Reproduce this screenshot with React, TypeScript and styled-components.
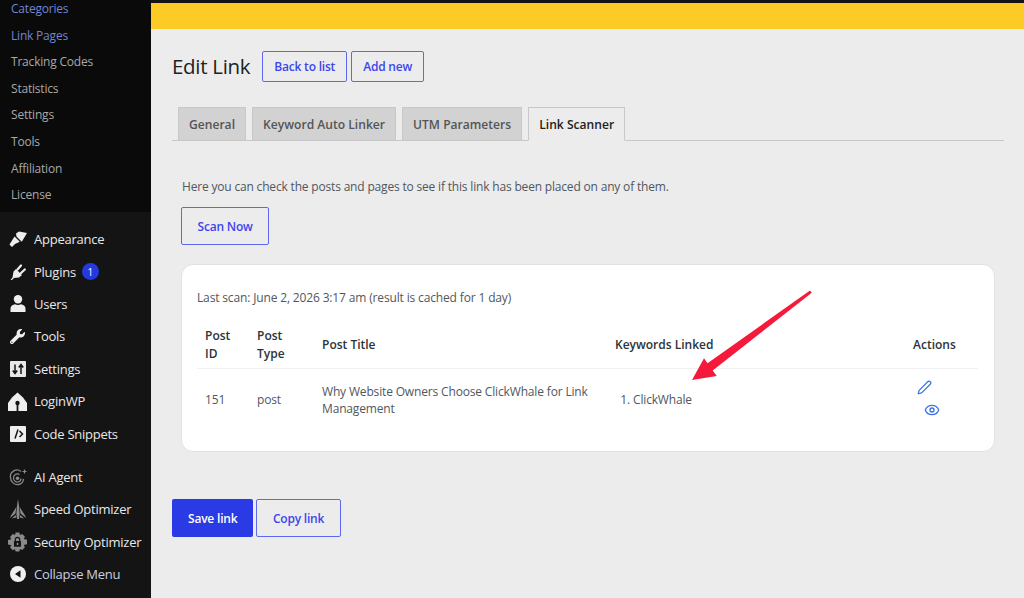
import styled, { createGlobalStyle } from "styled-components";
import { FaWrench } from "react-icons/fa";
import { Pen, Eye } from "lucide-react";

const GlobalStyle = createGlobalStyle`
  html, body {
    margin: 0;
    padding: 0;
    background: #ececec;
    overflow: hidden;
  }
  * {
    box-sizing: border-box;
  }
`;

const FONT = `"Open Sans", "Noto Sans", "Liberation Sans", sans-serif`;

const subItems = [
  { label: "Categories", active: true },
  { label: "Link Pages", active: true },
  { label: "Tracking Codes" },
  { label: "Statistics" },
  { label: "Settings" },
  { label: "Tools" },
  { label: "Affiliation" },
  { label: "License" },
];

const BrushIcon = () => (
  <svg width="18" height="16" viewBox="0 0 18 16" fill="#eeeeee">
    <path d="M7 2.500 10 0.500 18 2 12.800 10.800 11 9 7.500 5.500z" />
    <path d="M5.500 5.500 10.800 10.800 6 13 3 16 0.500 13.500 3 9.500z" />
  </svg>
);

const PlugIcon = () => (
  <svg width="16" height="17" viewBox="0 0 16 17" fill="#eeeeee">
    <path d="M2.500 14.500 3.500 8.500 6 6 12 12 9 14.500 4 15 2 17H0.500z" />
    <path
      d="M7.500 6.500 11 2.500M11 10 14.800 6.500"
      stroke="#eeeeee"
      strokeWidth="2.200"
      strokeLinecap="round"
    />
  </svg>
);

const UserIcon = () => (
  <svg width="16" height="17" viewBox="0 0 16 17" fill="#eeeeee">
    <circle cx="8" cy="4.300" r="4.200" />
    <path d="M0.500 17V13.500C0.500 11 3 9.800 5 9.300 6.500 10.200 9.500 10.200 11 9.300 13 9.800 15.500 11 15.500 13.500V17z" />
  </svg>
);

const SettingsIcon = () => (
  <svg width="16" height="16" viewBox="0 0 16 16">
    <rect width="16" height="16" rx="1" fill="#e8e8e8" />
    <path
      d="M5 3.500V12M11 4.500V13M2.800 9.500 5 12.500 7.200 9.500M8.800 6.500 11 3.500 13.200 6.500"
      fill="none"
      stroke="#141414"
      strokeWidth="1.500"
    />
  </svg>
);

const HomeIcon = () => (
  <svg width="19" height="19" viewBox="0 0 19 19">
    <path
      fill="#eeeeee"
      d="M9.500 0.500 15 5.500 19 11V19H0V11L4 5.500z"
    />
    <circle cx="9.500" cy="11" r="2.200" fill="#141414" />
    <rect x="8.600" y="11" width="1.800" height="8" fill="#141414" />
  </svg>
);

const CodeIcon = () => (
  <svg width="16" height="16" viewBox="0 0 16 16">
    <rect width="16" height="16" rx="1" fill="#eeeeee" />
    <path
      d="M9.500 5 12.500 8 9.500 11M8 3.500 5 12.500"
      fill="none"
      stroke="#141414"
      strokeWidth="1.500"
    />
  </svg>
);

const AgentIcon = () => (
  <svg width="18" height="18" viewBox="0 0 18 18" fill="none" stroke="#8a8a8a">
    <path
      d="M12 3.500A6.500 6.500 0 0 0 1.500 9.500C1.500 14 5.500 17 9.500 16.500 12.500 16 14.500 13.500 14.500 11"
      strokeWidth="1.300"
    />
    <path d="M10.500 6.500A4 4 0 0 0 4.500 10.500C4.800 13 7 14.300 9 14 11 13.600 12 12 12 10.500" strokeWidth="1.200" />
    <circle cx="8.500" cy="10.200" r="1.800" fill="#8a8a8a" stroke="none" />
    <path d="M15.500 1.500v4M13.500 3.500h4" strokeWidth="1.200" />
  </svg>
);

const SpeedIcon = () => (
  <svg width="16" height="20" viewBox="0 0 16 20" fill="#8a8a8a">
    <path d="M8 0 9.200 8 9.600 15 9 20H7L6.400 15 6.800 8z" />
    <path d="M6.300 8 5.500 14.500 0 19 1 16.500zM9.700 8 10.500 14.500 16 19 15 16.500z" />
    <path d="M5.500 16 6.300 18.500 2 19.500zM10.500 16 9.700 18.500 14 19.500z" />
  </svg>
);

const SecurityIcon = () => (
  <svg width="19" height="20" viewBox="0 0 20 20">
    <path
      fill="#8a8a8a"
      d="M8 0h4l.6 2.700 2.400-1 2.800 2.800-1.200 2.400 3.400.8v4.600l-3.400.8 1.200 2.400-2.800 2.800-2.400-1L12 20H8l-.6-2.400-2.400 1-2.800-2.800 1.200-2.400L0 12.600V8l3.400-.8-1.200-2.400L5 1.700l2.400 1z"
    />
    <path d="M7.700 9V7.500a2.300 2.300 0 0 1 4.600 0V9" fill="none" stroke="#141414" strokeWidth="1.200" />
    <rect x="6.300" y="9" width="7.400" height="6" rx="0.500" fill="#141414" />
    <rect x="9.200" y="10.800" width="1.600" height="2.400" fill="#8a8a8a" />
  </svg>
);

const CollapseIcon = () => (
  <svg width="16" height="16" viewBox="0 0 16 16">
    <circle cx="8" cy="8" r="8" fill="#f0f0f0" />
    <path d="M10.500 4.200v7.600L5 8z" fill="#141414" />
  </svg>
);

const primaryItems = [
  { label: "Appearance", icon: <BrushIcon />, badge: false },
  { label: "Plugins", icon: <PlugIcon />, badge: true },
  { label: "Users", icon: <UserIcon />, badge: false },
  { label: "Tools", icon: <FaWrench size={15} />, badge: false },
  { label: "Settings", icon: <SettingsIcon />, badge: false },
  { label: "LoginWP", icon: <HomeIcon />, badge: false },
  { label: "Code Snippets", icon: <CodeIcon />, badge: false },
];

const pluginItems = [
  { label: "AI Agent", icon: <AgentIcon /> },
  { label: "Speed Optimizer", icon: <SpeedIcon /> },
  { label: "Security Optimizer", icon: <SecurityIcon /> },
];

export default function App() {
  return (
    <>
      <GlobalStyle />
      <Page>
        <TopStrip />
        <Body>
          <Sidebar>
            <SubMenu>
              {subItems.map((item) => (
                <SubItem key={item.label} $active={item.active}>
                  {item.label}
                </SubItem>
              ))}
            </SubMenu>
            <MenuGroup>
              {primaryItems.map((item) => (
                <MenuItem key={item.label}>
                  <MenuIcon>{item.icon}</MenuIcon>
                  {item.label}
                  {item.badge && <Badge>1</Badge>}
                </MenuItem>
              ))}
            </MenuGroup>
            <PluginGroup>
              {pluginItems.map((item) => (
                <MenuItem key={item.label}>
                  <MenuIcon>{item.icon}</MenuIcon>
                  {item.label}
                </MenuItem>
              ))}
              <MenuItem $muted>
                <MenuIcon>
                  <CollapseIcon />
                </MenuIcon>
                Collapse Menu
              </MenuItem>
            </PluginGroup>
          </Sidebar>

          <Main>
            <YellowBar />
            <Content>
              <TitleRow>
                <Title>Edit Link</Title>
                <OutlineButton $small>Back to list</OutlineButton>
                <OutlineButton $small>Add new</OutlineButton>
              </TitleRow>

              <Tabs>
                <Tab>General</Tab>
                <Tab>Keyword Auto Linker</Tab>
                <Tab>UTM Parameters</Tab>
                <Tab $active>Link Scanner</Tab>
              </Tabs>

              <Panel>
                <Intro>
                  Here you can check the posts and pages to see if this link has
                  been placed on any of them.
                </Intro>
                <OutlineButton>Scan Now</OutlineButton>

                <Card>
                  <LastScan>
                    Last scan: June 2, 2026 3:17 am (result is cached for 1 day)
                  </LastScan>
                  <ResultTable>
                    <colgroup>
                      <col width="52" />
                      <col width="65" />
                      <col width="293" />
                      <col width="298" />
                      <col width="73" />
                    </colgroup>
                    <thead>
                      <tr>
                        <HeadCell>Post ID</HeadCell>
                        <HeadCell>Post Type</HeadCell>
                        <HeadCell>Post Title</HeadCell>
                        <HeadCell>Keywords Linked</HeadCell>
                        <HeadCell>Actions</HeadCell>
                      </tr>
                    </thead>
                    <tbody>
                      <tr>
                        <BodyCell>151</BodyCell>
                        <BodyCell>post</BodyCell>
                        <BodyCell>
                          Why Website Owners Choose ClickWhale for Link Management
                        </BodyCell>
                        <BodyCell>
                          <KeywordList>
                            <li>ClickWhale</li>
                          </KeywordList>
                        </BodyCell>
                        <BodyCell>
                          <ActionLink $indent={4}>
                            <Pen size={15} strokeWidth={2} />
                          </ActionLink>
                          <ActionLink $indent={11}>
                            <Eye size={16} strokeWidth={2} />
                          </ActionLink>
                        </BodyCell>
                      </tr>
                    </tbody>
                  </ResultTable>
                </Card>
              </Panel>

              <Footer>
                <SaveButton>Save link</SaveButton>
                <OutlineButton>Copy link</OutlineButton>
              </Footer>
            </Content>
          </Main>
        </Body>
        <Arrow viewBox="0 0 140 110" width="140" height="110">
          <path
            d="M129 0.500 130.800 2.800 31.700 80.500 35.700 86 11 90 23 68.300 26.500 73.200z"
            fill="#f5193c"
          />
        </Arrow>
      </Page>
    </>
  );
}

const Page = styled.div`
  position: relative;
  width: 1024px;
  height: 598px;
  overflow: hidden;
  font-family: ${FONT};
  background: #ececec;
`;
const TopStrip = styled.div`
  height: 3px;
  background: #141414;
`;
const Body = styled.div`
  display: flex;
  height: 595px;
`;
const Sidebar = styled.nav`
  width: 151px;
  flex-shrink: 0;
  background: #141414;
  display: flex;
  flex-direction: column;
`;
const SubMenu = styled.div`
  background: #0a0a0a;
  height: 216px;
  margin-top: -7px;
  padding-left: 11px;
  display: flex;
  flex-direction: column;
`;
const SubItem = styled.div<{ $active?: boolean }>`
  height: 26.6px;
  line-height: 26.6px;
  font-size: 12px;
  letter-spacing: -0.2px;
  color: ${(p) => (p.$active ? "#6f86d6" : "#a8a8a8")};
  white-space: nowrap;
`;
const MenuGroup = styled.div`
  display: flex;
  flex-direction: column;
  padding-top: 11px;
`;
const PluginGroup = styled(MenuGroup)`
  padding-top: 11px;
`;
const MenuItem = styled.div<{ $muted?: boolean }>`
  display: flex;
  align-items: center;
  height: 32.4px;
  font-size: 13px;
  letter-spacing: -0.25px;
  color: ${(p) => (p.$muted ? "#c9cfe0" : "#e8e8e8")};
  white-space: nowrap;
`;
const MenuIcon = styled.span`
  width: 19px;
  margin: 0 7px 0 8px;
  flex-shrink: 0;
  display: flex;
  align-items: center;
  justify-content: center;
  color: #eeeeee;
`;
const Badge = styled.span`
  width: 17px;
  height: 17px;
  margin-left: 6px;
  border-radius: 50%;
  background: #2439e0;
  color: #fff;
  font-size: 10px;
  letter-spacing: 0;
  display: flex;
  align-items: center;
  justify-content: center;
`;
const Main = styled.main`
  flex: 1;
  min-width: 0;
  display: flex;
  flex-direction: column;
`;
const YellowBar = styled.div`
  height: 26px;
  background: #fdcb25;
`;
const Content = styled.div`
  padding: 22px 20px 0 21px;
`;
const TitleRow = styled.div`
  display: flex;
  align-items: center;
  gap: 4px;
  height: 31px;
`;
const Title = styled.h1`
  margin: 0 8px 2px 0;
  font-size: 20.5px;
  letter-spacing: -0.3px;
  font-weight: 400;
  color: #222;
`;
const OutlineButton = styled.button<{ $small?: boolean }>`
  height: ${(p) => (p.$small ? "31px" : "38px")};
  padding: 0 ${(p) => (p.$small ? "11px" : "15.5px")};
  background: transparent;
  border: 1px solid #5f68f2;
  border-radius: 2px;
  color: #3c46ee;
  font-family: inherit;
  font-size: 12px;
  letter-spacing: -0.2px;
  font-weight: 600;
`;
const Tabs = styled.div`
  display: flex;
  gap: 6px;
  margin-top: 25px;
  padding-left: 6px;
  height: 34px;
  border-bottom: 1px solid #c8c8c8;
`;
const Tab = styled.div<{ $active?: boolean }>`
  height: ${(p) => (p.$active ? "34px" : "33px")};
  padding: 0 10px;
  display: flex;
  align-items: center;
  font-size: 12.1px;
  font-weight: 600;
  background: ${(p) => (p.$active ? "#ececec" : "#d2d2d2")};
  color: ${(p) => (p.$active ? "#222" : "#555")};
  border: 1px solid #c8c8c8;
  border-bottom: ${(p) => (p.$active ? "1px solid #ececec" : "none")};
`;
const Panel = styled.div`
  padding: 36px 0 0 9px;
`;
const Intro = styled.p`
  margin: 0 0 11px 1px;
  height: 19px;
  line-height: 19px;
  font-size: 12px;
  letter-spacing: -0.18px;
  color: #50575e;
`;
const Card = styled.div`
  width: 814px;
  height: 188px;
  margin-top: 19px;
  padding: 24px 15px 0;
  background: #fff;
  border: 1px solid #e2e2e2;
  border-radius: 12px;
`;
const LastScan = styled.div`
  height: 18px;
  line-height: 18px;
  font-size: 12px;
  letter-spacing: -0.15px;
  color: #50575e;
`;
const ResultTable = styled.table`
  width: 781px;
  table-layout: fixed;
  border-collapse: collapse;
  margin-top: 12px;
`;
const HeadCell = styled.th`
  padding: 8px 8px 5px;
  text-align: left;
  vertical-align: middle;
  font-size: 12px;
  line-height: 18px;
  font-weight: 600;
  color: #2c3338;
  border-bottom: 1px solid #f0f0f0;
`;
const BodyCell = styled.td`
  padding: 9px 8px;
  font-size: 12px;
  letter-spacing: -0.16px;
  line-height: 17.5px;
  color: #50575e;
  vertical-align: middle;
`;
const KeywordList = styled.ol`
  margin: 0;
  padding: 0 0 0 18px;
`;
const ActionLink = styled.span<{ $indent: number }>`
  display: block;
  height: 22px;
  padding-top: 2px;
  margin-left: ${(p) => p.$indent}px;
  color: #3b72e8;
`;
const Footer = styled.div`
  display: flex;
  gap: 3px;
  margin-top: 47px;
`;
const SaveButton = styled.button`
  height: 38px;
  padding: 0 16px;
  border: none;
  border-radius: 2px;
  background: #2a3ae4;
  color: #fff;
  font-family: inherit;
  font-size: 12px;
  letter-spacing: -0.2px;
  font-weight: 600;
`;
const Arrow = styled.svg`
  position: absolute;
  left: 681px;
  top: 290px;
`;
